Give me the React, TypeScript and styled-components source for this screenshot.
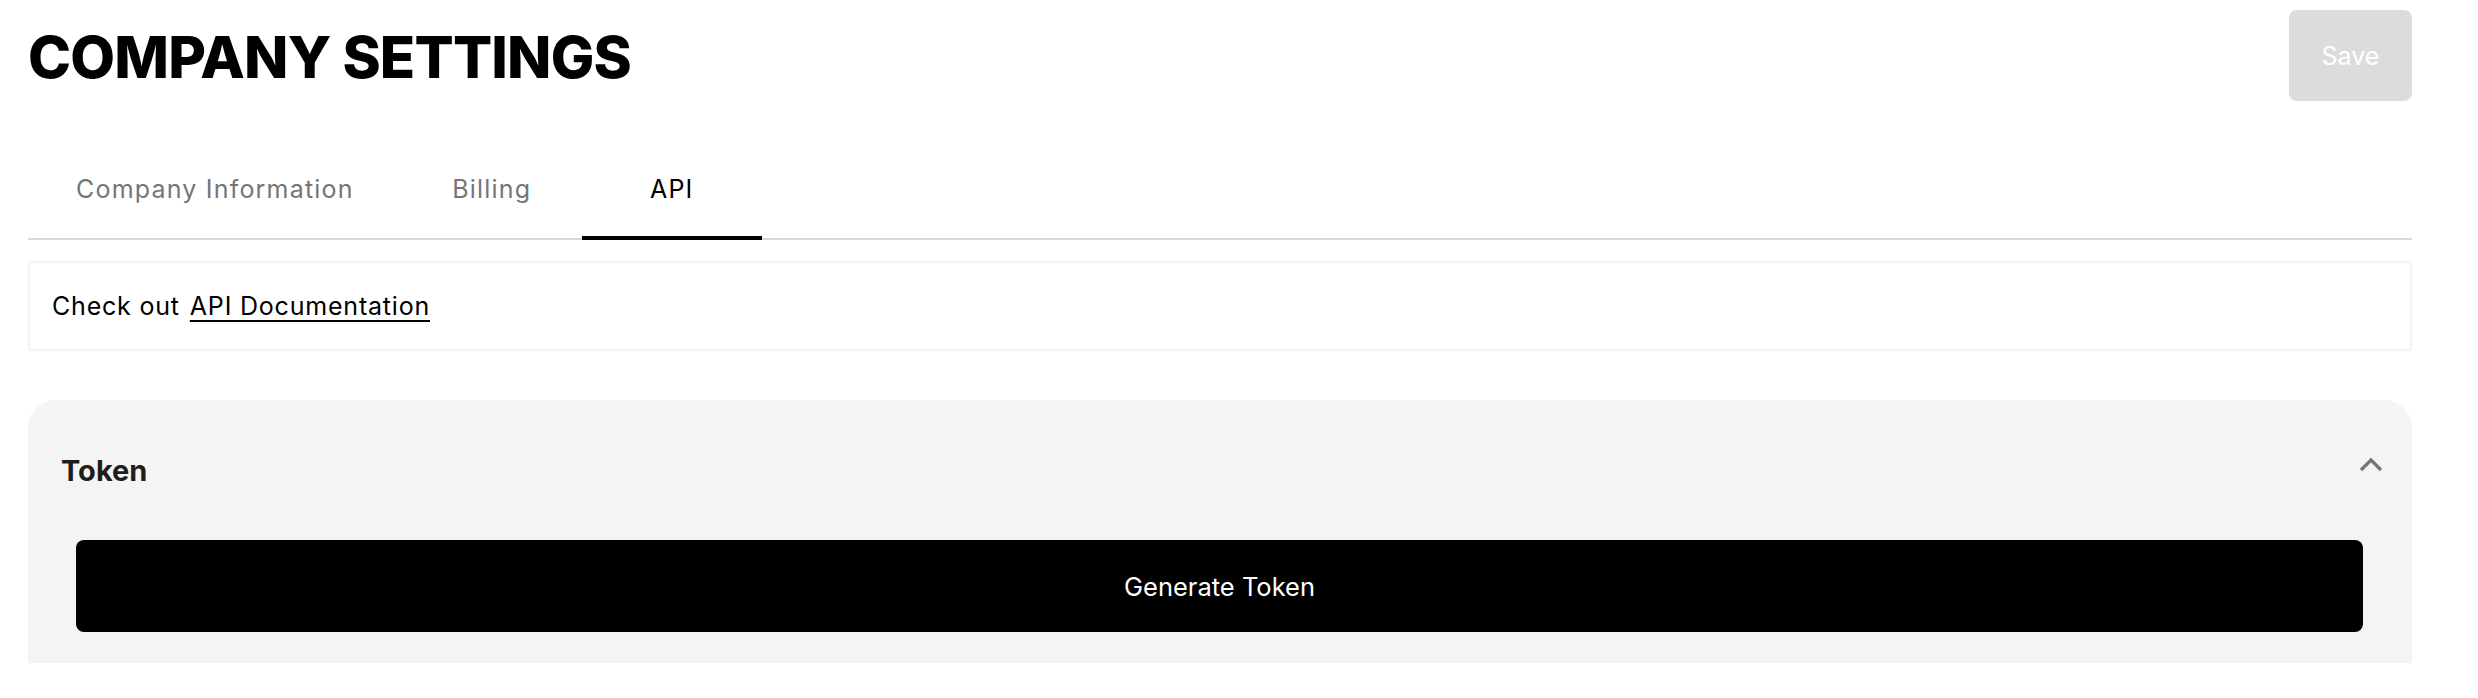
import styled, { createGlobalStyle } from "styled-components";

const GlobalStyle = createGlobalStyle`
  body {
    margin: 0;
    background: #fff;
    font-family: Inter, "Liberation Sans", sans-serif;
    color: #000;
  }
`;

const Page = styled.div`
  height: 663px;
  overflow: hidden;
  padding: 10px 66px 0 28px;
  box-sizing: border-box;
`;

const Header = styled.div`
  display: flex;
  justify-content: space-between;
  align-items: flex-start;
  height: 132px;
`;

const Title = styled.h1`
  margin: 11px 0 0 0;
  font-size: 58px;
  font-weight: 800;
  line-height: 72px;
  letter-spacing: -0.8px;
`;

const SaveButton = styled.button`
  width: 123px;
  height: 91px;
  border: none;
  border-radius: 8px;
  background: #dcdcdc;
  color: #fff;
  font-family: Inter, sans-serif;
  font-size: 25px;
  cursor: not-allowed;
`;

const Tabs = styled.div`
  display: flex;
  border-bottom: 2px solid #d9d9d9;
`;

const Tab = styled.div<{ $active?: boolean }>`
  min-width: 180px;
  box-sizing: border-box;
  padding: 0 48px;
  height: 98px;
  display: flex;
  align-items: center;
  justify-content: center;
  font-size: 25px;
  letter-spacing: 1.2px;
  color: ${(p) => (p.$active ? "#000" : "#757575")};
  border-bottom: 4px solid ${(p) => (p.$active ? "#000" : "transparent")};
  margin-bottom: -2px;
  cursor: pointer;
`;

const InfoBox = styled.div`
  margin-top: 21px;
  height: 90px;
  box-sizing: border-box;
  border: 2px solid #f3f3f3;
  padding: 0 22px;
  display: flex;
  align-items: center;
  gap: 10px;
  font-size: 25px;
  letter-spacing: 0.8px;
`;

const DocLink = styled.a`
  color: #000;
  text-decoration: underline;
  text-decoration-thickness: 2px;
  text-underline-offset: 5px;
`;

const Panel = styled.section`
  margin-top: 49px;
  background: #f4f4f4;
  border-radius: 28px 28px 0 0;
  padding: 0 49px 48px 48px;
`;

const PanelHeader = styled.div`
  display: flex;
  justify-content: space-between;
  align-items: center;
  height: 140px;
  margin: 0 -20px 0 -15px;
`;

const PanelTitle = styled.h3`
  margin: 0;
  font-size: 29px;
  font-weight: 700;
  color: #1e1e1e;
`;

const ChevronIcon = styled.svg`
  margin-bottom: 12px;
`;

const GenerateButton = styled.button`
  display: block;
  width: 100%;
  height: 92px;
  border: none;
  border-radius: 8px;
  background: #000;
  color: #fff;
  font-family: Inter, sans-serif;
  font-size: 25.5px;
  cursor: pointer;
`;

const Chevron = () => (
  <ChevronIcon width="24" height="16" viewBox="0 0 24 16" fill="none">
    <polyline points="2,14 12,4 22,14" stroke="#757575" strokeWidth="3.2" />
  </ChevronIcon>
);

export default function App() {
  return (
    <>
      <GlobalStyle />
      <Page>
        <Header>
          <Title>COMPANY SETTINGS</Title>
          <SaveButton disabled>Save</SaveButton>
        </Header>
        <Tabs>
          <Tab>Company Information</Tab>
          <Tab>Billing</Tab>
          <Tab $active>API</Tab>
        </Tabs>
        <InfoBox>
          <span>Check out</span>
          <DocLink href="#">API Documentation</DocLink>
        </InfoBox>
        <Panel>
          <PanelHeader>
            <PanelTitle>Token</PanelTitle>
            <Chevron />
          </PanelHeader>
          <GenerateButton>Generate Token</GenerateButton>
        </Panel>
      </Page>
    </>
  );
}
